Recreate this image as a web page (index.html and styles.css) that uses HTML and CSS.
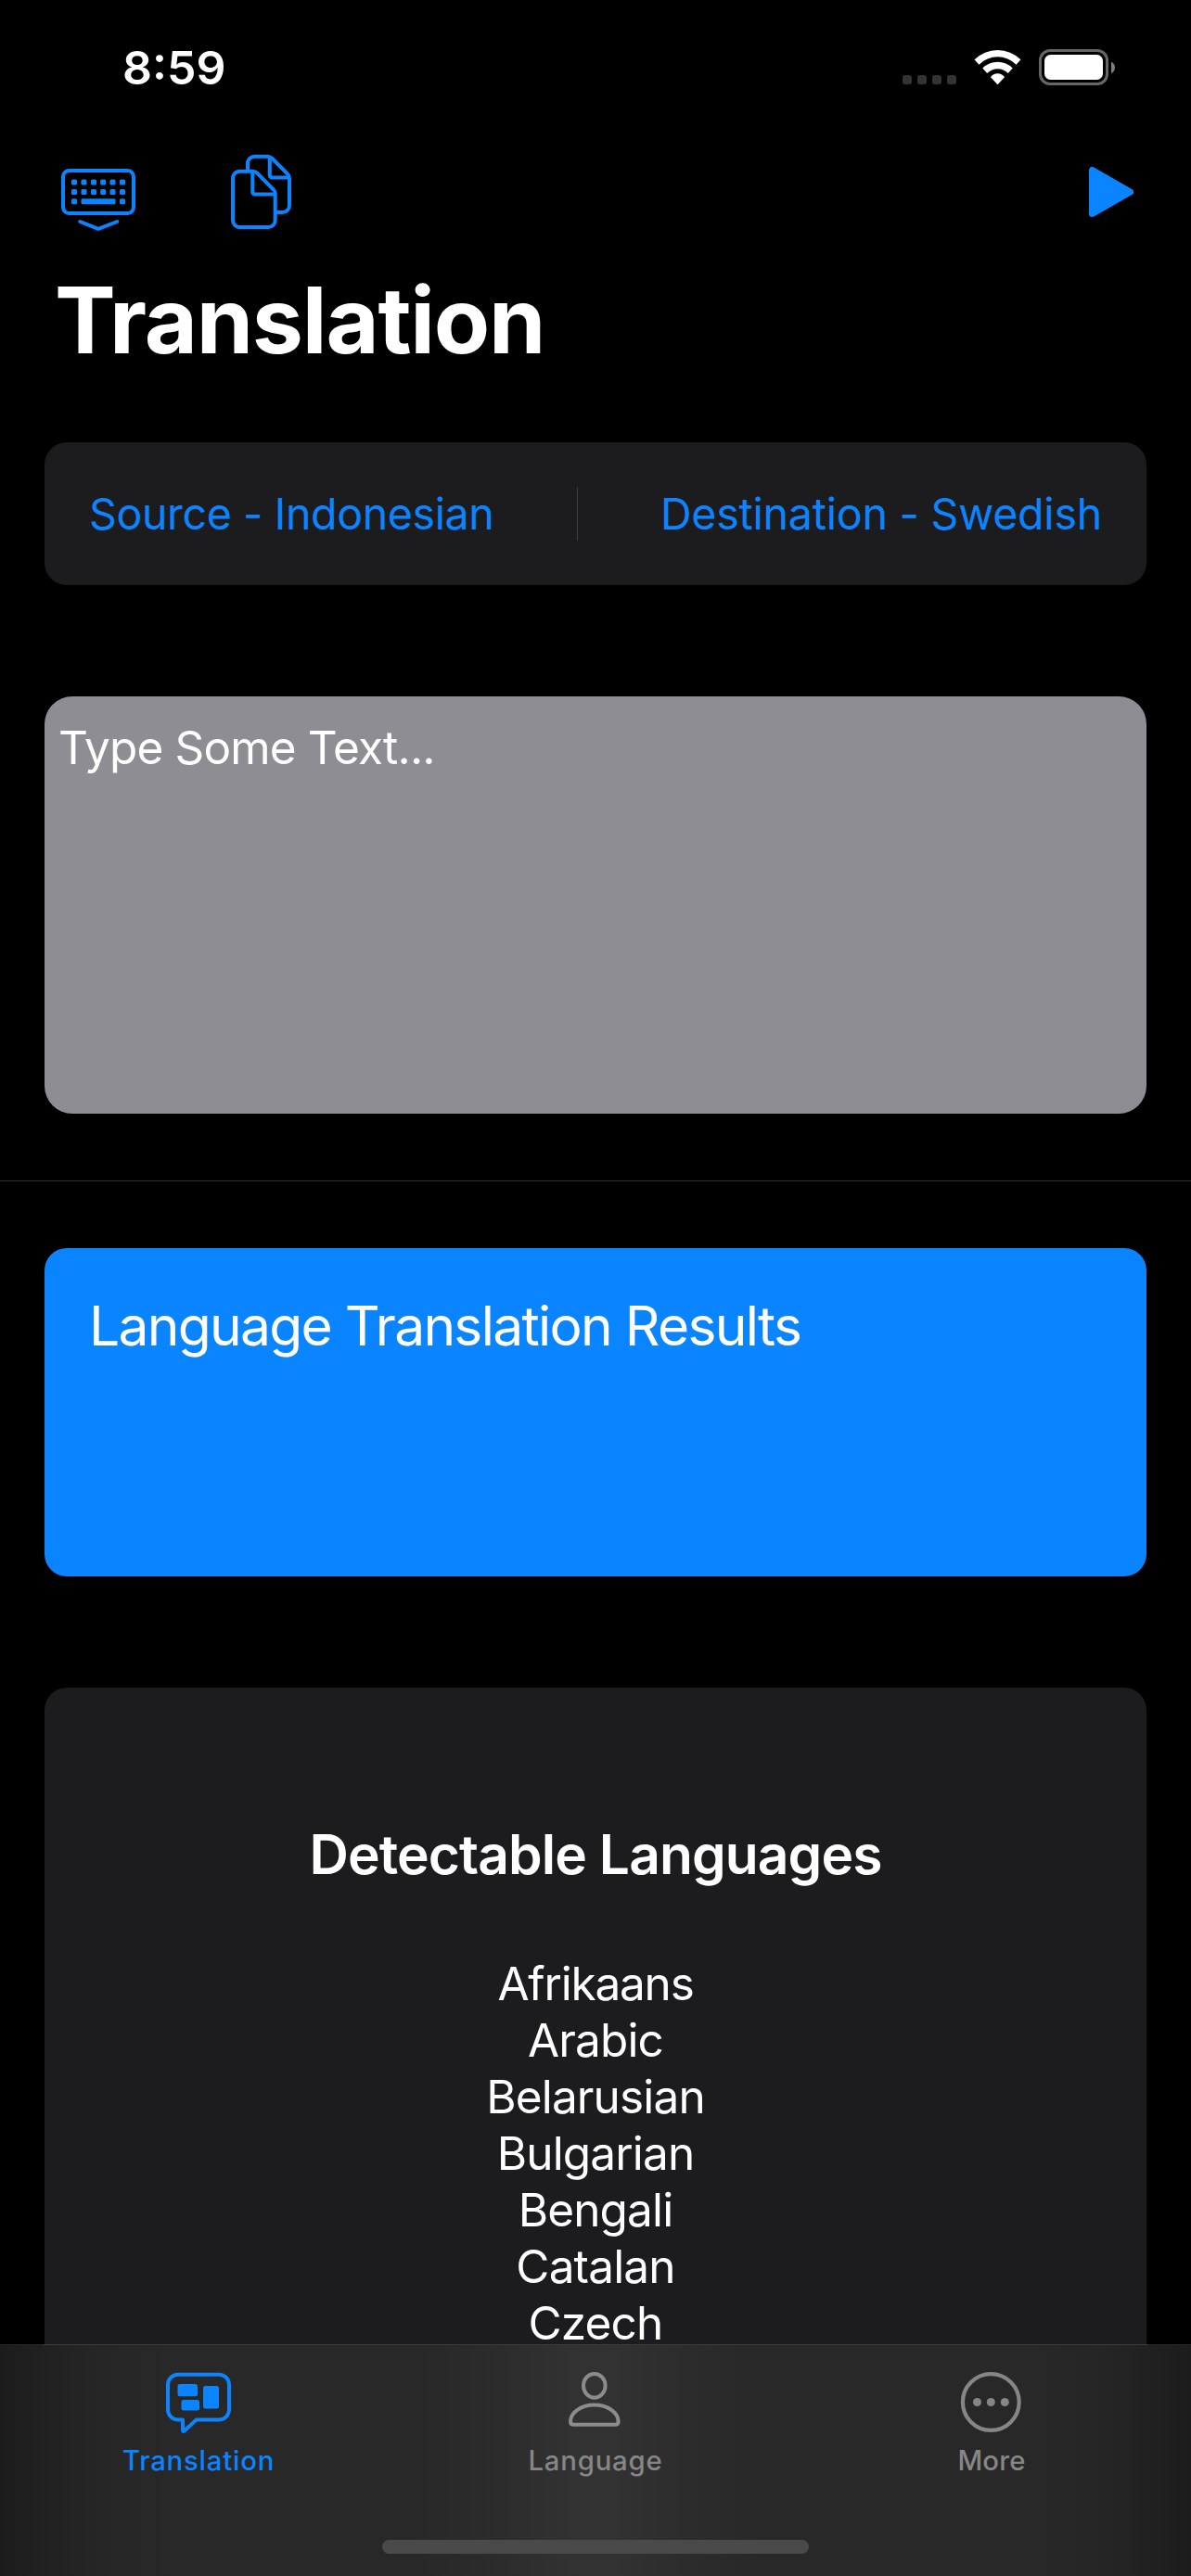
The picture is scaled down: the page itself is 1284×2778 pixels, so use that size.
FILE: index.html
```html
<!DOCTYPE html>
<html lang="en">
<head>
<meta charset="utf-8">
<title>Translation</title>
<link rel="stylesheet" href="styles.css">
</head>
<body>
<div class="screen">
  <header class="status">
    <time class="clock">8:59</time>
    <svg class="status-icons" viewBox="973 50 230 44" width="230" height="44" aria-hidden="true">
      <g fill="#333"><rect x="973" y="81" width="10" height="10" rx="3"/><rect x="989" y="81" width="10" height="10" rx="3"/><rect x="1005" y="81" width="10" height="10" rx="3"/><rect x="1021" y="81" width="10" height="10" rx="3"/></g>
      <g fill="#fff">
        <path d="M1050.5 64.3A35.5 35.5 0 0 1 1100.5 64.3L1095.5 69.7A28 28 0 0 0 1055.5 69.7Z"/>
        <path d="M1059.3 73.5A23 23 0 0 1 1091.7 73.5L1086.8 78.9A16 16 0 0 0 1064.2 78.9Z"/>
        <path d="M1068 83.3A9 9 0 0 1 1083 83.3L1075.5 91.2Z"/>
        <rect x="1126" y="59" width="63" height="27" rx="6.5"/>
      </g>
      <rect x="1121.5" y="54.5" width="72" height="36" rx="10.5" fill="none" stroke="#666" stroke-width="3"/>
      <path d="M1198 66.8C1203.3 69 1203.3 77 1198 79Z" fill="#808080"/>
    </svg>
  </header>

  <nav class="toolbar">
    <svg viewBox="64 162 84 92" width="84" height="92" aria-hidden="true">
      <g fill="none" stroke="#0a84ff" stroke-width="4" stroke-linecap="round" stroke-linejoin="round">
        <rect x="68" y="184" width="76" height="46" rx="6.5"/>
        <path d="M86.3 239L106 246.8L126.3 239"/>
      </g>
      <g fill="#0a84ff">
        <rect x="77" y="193.5" width="6" height="6" rx="1.5"/><rect x="87.5" y="193.5" width="6" height="6" rx="1.5"/><rect x="98" y="193.5" width="6" height="6" rx="1.5"/><rect x="108.2" y="193.5" width="6" height="6" rx="1.5"/><rect x="118.5" y="193.5" width="6" height="6" rx="1.5"/><rect x="129" y="193.5" width="6" height="6" rx="1.5"/>
        <rect x="77" y="204" width="6" height="6" rx="1.5"/><rect x="87.5" y="204" width="6" height="6" rx="1.5"/><rect x="98" y="204" width="6" height="6" rx="1.5"/><rect x="108.2" y="204" width="6" height="6" rx="1.5"/><rect x="118.5" y="204" width="6" height="6" rx="1.5"/><rect x="129" y="204" width="6" height="6" rx="1.5"/>
        <rect x="77" y="214.2" width="6" height="6" rx="1.5"/><rect x="87.5" y="214.2" width="37" height="6" rx="1.5"/><rect x="129" y="214.2" width="6" height="6" rx="1.5"/>
      </g>
    </svg>
    <svg class="copy" viewBox="246 162 72 92" width="72" height="92" aria-hidden="true">
      <g fill="none" stroke="#0a84ff" stroke-width="4" stroke-linejoin="round">
        <path d="M267 184V176.2a7.5 7.5 0 0 1 7.5-7.5H288.5q2.7 0 4.7 2L310 187.7q2 2 2 5V221.5a7.5 7.5 0 0 1-7.5 7.5H298"/>
        <path d="M290.8 170V188.5q0 3 3 3H311"/>
        <path d="M258.5 184.7H272.5q2.7 0 4.7 2L294.7 204.3q2 2 2 5V237.5a7.5 7.5 0 0 1-7.5 7.5H258.5a7.5 7.5 0 0 1-7.5-7.5V192.2a7.5 7.5 0 0 1 7.5-7.5Z"/>
        <path d="M272.3 186V206.5q0 3 3 3H296"/>
      </g>
    </svg>
    <svg class="play" viewBox="1172 162 52 92" width="52" height="92" aria-hidden="true">
      <path d="M1177.6 183.5V230.5L1218.4 207Z" fill="#0a84ff" stroke="#0a84ff" stroke-width="7.2" stroke-linejoin="round"/>
    </svg>
  </nav>

  <h1 class="title">Translation</h1>

  <main class="content">
    <section class="pair card">
      <span class="source">Source - Indonesian</span>
      <span class="divider"></span>
      <span class="destination">Destination - Swedish</span>
    </section>
    <section class="input"><span class="placeholder">Type Some Text...</span></section>
    <hr class="rule">
    <section class="result"><span class="result-text">Language Translation Results</span></section>
    <section class="languages card">
      <h2 class="heading">Detectable Languages</h2>
      <ul class="list">
        <li>Afrikaans</li><li>Arabic</li><li>Belarusian</li><li>Bulgarian</li><li>Bengali</li><li>Catalan</li><li>Czech</li>
      </ul>
    </section>
  </main>

  <footer class="tabbar">
    <div class="tabs">
      <div class="tab active">
        <svg viewBox="177 2554 74 74" width="74" height="74" aria-hidden="true">
          <path d="M192 2560.7H236a11 11 0 0 1 11 11V2598.6a11 11 0 0 1-11 11H211.5L199 2621.3Q197 2623 197 2620.5V2609.6H192a11 11 0 0 1-11-11V2571.7a11 11 0 0 1 11-11Z" fill="none" stroke="#0a84ff" stroke-width="4" stroke-linejoin="round"/>
          <g fill="#0a84ff"><rect x="191.5" y="2571" width="21.5" height="13.3" rx="2.5"/><rect x="195.5" y="2588" width="19.5" height="11.5" rx="2.5"/><rect x="219" y="2573" width="17" height="24.5" rx="2.5"/></g>
        </svg>
        <span class="tab-label">Translation</span>
      </div>
      <div class="tab">
        <svg viewBox="605 2554 74 74" width="74" height="74" aria-hidden="true">
          <g fill="none" stroke="#8c8c8c" stroke-width="4" stroke-linejoin="round">
            <ellipse cx="640.8" cy="2572.8" rx="11.8" ry="12.9"/>
            <path d="M618.5 2614.8Q615 2614.8 615 2611.3C615 2602.5 625.5 2593.5 640.8 2593.5S666.6 2602.5 666.6 2611.3Q666.6 2614.8 663.1 2614.8Z"/>
          </g>
        </svg>
        <span class="tab-label">Language</span>
      </div>
      <div class="tab">
        <svg viewBox="1033 2554 74 74" width="74" height="74" aria-hidden="true">
          <circle cx="1068.3" cy="2590.5" r="30.4" fill="none" stroke="#868686" stroke-width="4.2"/>
          <g fill="#868686"><circle cx="1053.5" cy="2590.5" r="4.5"/><circle cx="1068.3" cy="2590.5" r="4.5"/><circle cx="1083.3" cy="2590.5" r="4.5"/></g>
        </svg>
        <span class="tab-label more">More</span>
      </div>
    </div>
    <div class="home"></div>
  </footer>
</div>
</body>
</html>
```
FILE: styles.css
```css
* { box-sizing: border-box; margin: 0; padding: 0; }
body { background: #000; color: #fff; font-family: Inter, "Liberation Sans", sans-serif; }
svg { display: block; flex: none; }
.screen { display: flex; flex-direction: column; width: 1284px; height: 2778px; overflow: hidden; white-space: nowrap; }

.status { display: flex; flex: none; justify-content: space-between; align-items: flex-start; height: 162px; padding: 43px 81px 0 132px; }
.clock { font-size: 50px; line-height: 60px; font-weight: 600; }
.status-icons { margin-top: 7px; }

.toolbar { display: flex; flex: none; height: 92px; padding: 0 60px 0 64px; }
.copy { margin-left: 98px; }
.play { margin-left: auto; }

.title { flex: none; height: 223px; padding: 31px 0 0 59px; font-size: 98.6px; line-height: 120px; font-weight: 700; letter-spacing: -1.2px; }

.content { display: flex; flex: 1; flex-direction: column; min-height: 0; overflow: hidden; }
.card { background: #1c1c1e; }
.pair { display: flex; flex: none; align-items: center; justify-content: space-between; height: 154px; margin: 0 48px; padding: 0 48px; border-radius: 24px; color: #0a84ff; font-size: 46.5px; line-height: 58px; font-feature-settings: "calt" 0; }
.source { letter-spacing: -0.37px; }
.destination { letter-spacing: -0.22px; }
.divider { width: 1px; height: 58px; background: #3d3d41; }
.input { flex: none; height: 450px; margin: 120px 48px 0; padding: 25px 15px; border-radius: 30px; background: #8e8d93; }
.placeholder { display: block; font-size: 49.5px; line-height: 60px; letter-spacing: -0.85px; }
.rule { flex: none; height: 1px; margin: 72px 0; border: 0; background: #303033; }
.result { flex: none; height: 354px; margin: 0 48px; padding: 48px; border-radius: 24px; background: #0a84ff; }
.result-text { display: block; font-size: 58.7px; line-height: 72px; letter-spacing: -1.7px; }
.languages { flex: none; height: 900px; margin: 120px 48px 0; padding-top: 144px; border-radius: 24px; text-align: center; }
.heading { font-size: 58.7px; line-height: 72px; font-weight: 600; letter-spacing: -0.9px; }
.list { margin-top: 73px; list-style: none; font-size: 49.5px; line-height: 61px; letter-spacing: -0.85px; }
.list li:first-child { letter-spacing: -1.2px; }

.tabbar { flex: none; height: 250px; border-top: 1px solid; border-image: linear-gradient(90deg, #272727 48px, #3c3c3e 48px, #3c3c3e 1236px, #272727 1236px) 1; background: linear-gradient(90deg, #1c1c1c 0, #212121 48px, #262626 110px, #282828 180px, #282828 450px, #2c2c2c 540px, #323232 620px, #323232 660px, #2c2c2c 740px, #282828 820px, #282828 1110px, #252525 1190px, #212121 1236px, #1c1c1c 1284px); }
.tabs { display: grid; grid-template-columns: repeat(3, 1fr); height: 210px; padding-top: 25px; }
.tab { display: flex; flex-direction: column; align-items: center; color: #868686; }
.active { color: #0a84ff; }
.tab-label { margin-top: 8px; font-size: 29.3px; line-height: 36px; font-weight: 500; letter-spacing: 0.8px; }
.more { padding-right: 2px; letter-spacing: 0.2px; }
.home { width: 460px; height: 15px; margin: 0 auto; border-radius: 8px; background: #4a4a4a; }
```
